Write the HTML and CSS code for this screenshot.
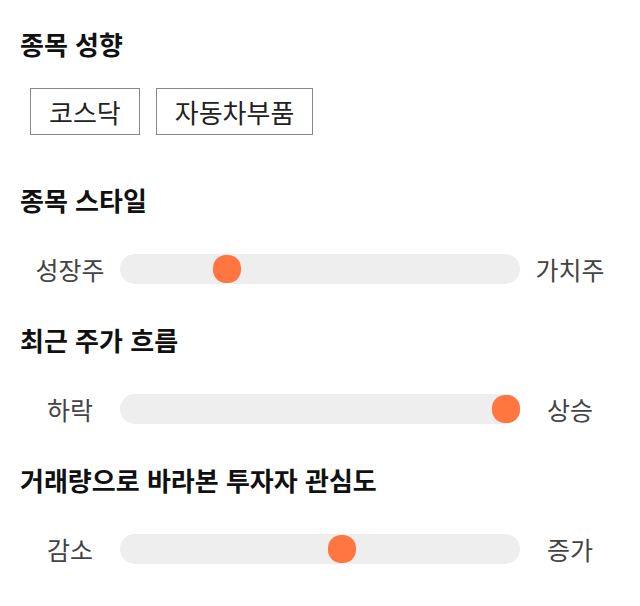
FILE: index.html
```html
<!DOCTYPE html>
<html lang="ko">
<head>
  <meta charset="UTF-8">
  <meta name="viewport" content="width=device-width, initial-scale=1.0">
  <title>종목 분석</title>
  <link rel="stylesheet" href="styles.css">
</head>
<body>

<div class="section">
  <h2 class="title">종목 성향</h2>
  <div class="chips">
    <span class="chip">코스닥</span>
    <span class="chip">자동차부품</span>
  </div>
</div>

<div class="section">
  <h2 class="title">종목 스타일</h2>
  <div class="slider-row">
    <span class="label">성장주</span>
    <div class="track"><span class="thumb" style="--v: 0.25"></span></div>
    <span class="label">가치주</span>
  </div>
</div>

<div class="section">
  <h2 class="title">최근 주가 흐름</h2>
  <div class="slider-row">
    <span class="label">하락</span>
    <div class="track"><span class="thumb" style="--v: 1"></span></div>
    <span class="label">상승</span>
  </div>
</div>

<div class="section">
  <h2 class="title">거래량으로 바라본 투자자 관심도</h2>
  <div class="slider-row">
    <span class="label">감소</span>
    <div class="track"><span class="thumb" style="--v: 0.56"></span></div>
    <span class="label">증가</span>
  </div>
</div>

</body>
</html>
```

FILE: styles.css
```css
* {margin: 0; padding: 0; box-sizing: border-box;}
body { font-family: 'Noto Sans CJK KR', 'Noto Sans', sans-serif; background: #fff; color: #111; padding: 29px 20px 20px;}
.section { padding-bottom: 31px;}
.section:last-child { padding-bottom: 0;}
.title { font-size: 26px; font-weight: 700; line-height: 30px; margin-bottom: 29px;}
.chips { display: flex; gap: 16px; padding-left: 10px; margin-top: 2px; padding-bottom: 19px;}
.chip { border: 1px solid #888; padding: 9px 18px; font-size: 26px; line-height: 27px; color: #222;}
.slider-row { display: flex; align-items: center; height: 50px;}
.label { width: 100px; text-align: center; font-size: 25px; color: #444;}
.track { flex: 1; height: 30px; background: #eee; border-radius: 15px; position: relative;}
.thumb { position: absolute; top: 1px; left: calc((100% - 28px) * var(--v)); width: 28px; height: 28px; background: #ff7640; border-radius: 13px;}
```
